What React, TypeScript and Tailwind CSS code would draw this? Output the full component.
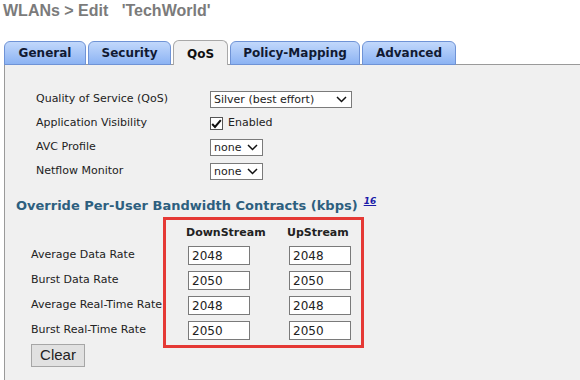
const tabs = [
  { name: "General", w: "w-[82px]" },
  { name: "Security", w: "w-[83px]" },
  { name: "QoS", w: "w-[55px]", active: true },
  { name: "Policy-Mapping", w: "w-[130px]" },
  { name: "Advanced", w: "w-[94px]" },
];

const rates = [
  { label: "Average Data Rate", down: "2048", up: "2048" },
  { label: "Burst Data Rate", down: "2050", up: "2050" },
  { label: "Average Real-Time Rate", down: "2048", up: "2048" },
  { label: "Burst Real-Time Rate", down: "2050", up: "2050" },
];

function Chevron() {
  return (
    <svg width="11" height="7" viewBox="0 0 11 7" className="shrink-0">
      <path d="M1 1 L5.5 5.5 L10 1" fill="none" stroke="#111" strokeWidth="1.5" />
    </svg>
  );
}

function FakeSelect({ value, w }: { value: string; w: string }) {
  return (
    <div className={`${w} h-[17px] bg-white border border-[#7a7a7a] flex items-center justify-between pl-[3px] pr-[4px]`}>
      <span className="leading-none">{value}</span>
      <Chevron />
    </div>
  );
}

export default function App() {
  return (
    <div className="w-[580px] h-[380px] overflow-hidden bg-white font-['DejaVu_Sans',Verdana,sans-serif] text-[11px] text-[#222]">
      <div className="pl-[3px] pt-[2px] h-[40px] font-['Liberation_Sans',Arial,sans-serif] font-bold text-[16px] text-[#7b7b7b] whitespace-pre leading-[18px]">
        {"WLANs > Edit   'TechWorld'"}
      </div>

      <div className="pl-[4px]">
        <div className="flex items-end gap-[2px] relative z-10 -mb-px">
          {tabs.map((t) =>
            t.active ? (
              <div
                key={t.name}
                className={`${t.w} h-[25px] rounded-t-[6px] border border-b-0 border-[#a8a8a8] bg-[#f0f0f0] flex items-center justify-center font-bold text-[12px] text-[#111] pt-[1px]`}
              >
                {t.name}
              </div>
            ) : (
              <div
                key={t.name}
                className={`${t.w} h-[24px] rounded-t-[6px] border border-[#6f93d6] bg-gradient-to-b from-[#c2d8fb] to-[#8cb3f3] flex items-center justify-center font-bold text-[12px] text-[#111a33]`}
              >
                {t.name}
              </div>
            )
          )}
        </div>

        <div className="h-[320px] border-l border-t border-[#9a9a9a] bg-[#f0f0f0] pt-[26px]">
          <div className="flex flex-col gap-[7px] pl-[31px]">
            <div className="flex items-center h-[17px]">
              <span className="w-[174px]">Quality of Service (QoS)</span>
              <FakeSelect value="Silver (best effort)" w="w-[142px]" />
            </div>
            <div className="flex items-center h-[17px]">
              <span className="w-[174px]">Application Visibility</span>
              <div className="w-[13px] h-[13px] bg-white border border-[#555] flex items-center justify-center">
                <svg width="11" height="10" viewBox="0 0 11 10">
                  <path d="M1.2 5 L4 8 L9.8 1.2" fill="none" stroke="#111" strokeWidth="2" />
                </svg>
              </div>
              <span className="ml-[5px]">Enabled</span>
            </div>
            <div className="flex items-center h-[17px]">
              <span className="w-[174px]">AVC Profile</span>
              <FakeSelect value="none" w="w-[53px]" />
            </div>
            <div className="flex items-center h-[17px]">
              <span className="w-[174px]">Netflow Monitor</span>
              <FakeSelect value="none" w="w-[53px]" />
            </div>
          </div>

          <div className="mt-[18px] pl-[11px] flex items-start">
            <span className="font-bold text-[13px] text-[#2d5f7f] leading-[16px]">
              Override Per-User Bandwidth Contracts (kbps)
            </span>
            <a className="ml-[6px] -mt-[3px] text-[9px] italic font-bold text-[#1a1aa8] underline">16</a>
          </div>

          <div className="relative pl-[26px] mt-[3px]">
            <div className="absolute left-[158px] top-0 w-[201px] h-[131px] border-[3px] border-[#e53935] pointer-events-none z-10" />
            <div className="grid grid-cols-[157px_62px_39px_62px] pt-[9px]">
              <div />
              <div className="font-bold h-[18px] leading-[14px] -ml-[2px]">DownStream</div>
              <div />
              <div className="font-bold h-[18px] leading-[14px] -ml-[2px]">UpStream</div>
            </div>
            <div className="flex flex-col gap-[6px] mt-[2px]">
              {rates.map((r) => (
                <div key={r.label} className="grid grid-cols-[157px_62px_39px_62px] items-center h-[19px]">
                  <span className="whitespace-nowrap">{r.label}</span>
                  <div className="h-[19px] bg-white border border-[#7a7a7a] pl-[3px] flex items-center text-[12px]">{r.down}</div>
                  <div />
                  <div className="h-[19px] bg-white border border-[#7a7a7a] pl-[3px] flex items-center text-[12px]">{r.up}</div>
                </div>
              ))}
            </div>
            <button className="mt-[4px] w-[54px] h-[23px] bg-[#e1e1e1] border border-[#a6a6a6] font-['Liberation_Sans',Arial,sans-serif] text-[15px] text-[#222] flex items-center justify-center">
              Clear
            </button>
          </div>
        </div>
      </div>
    </div>
  );
}
